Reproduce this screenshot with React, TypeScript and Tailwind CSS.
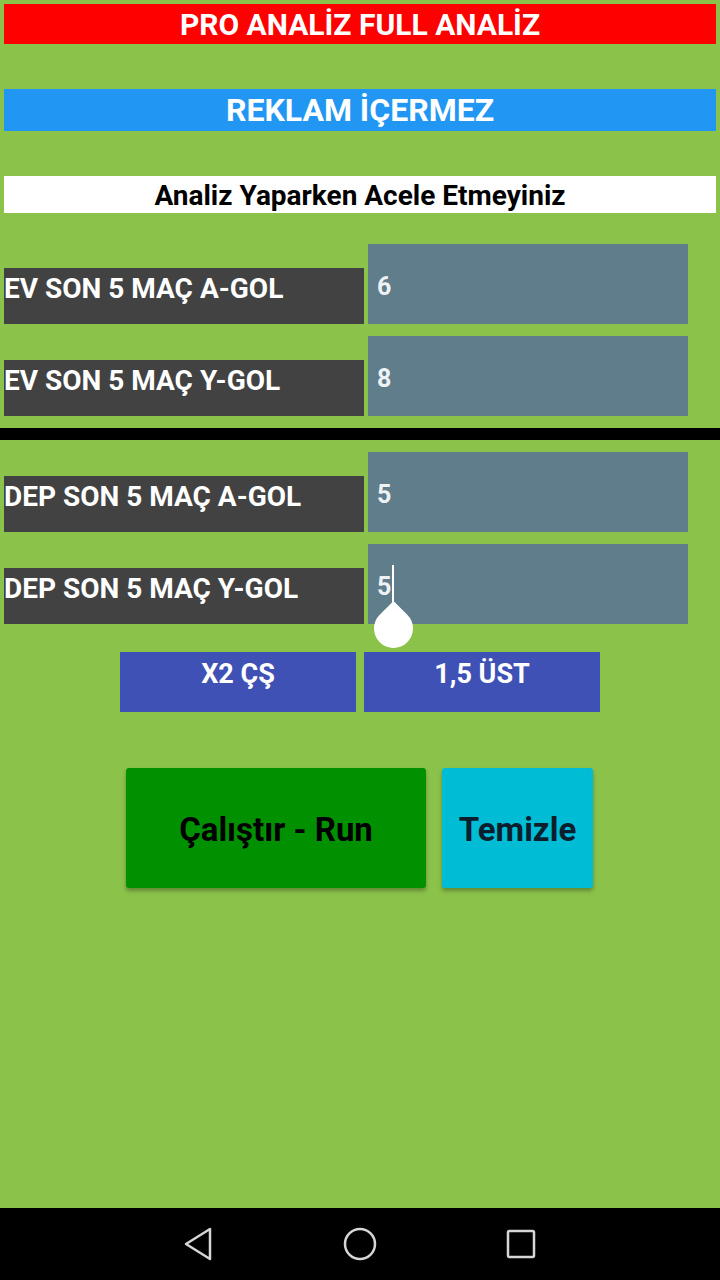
import { useState } from "react";

const rows = [
  { label: "EV SON 5 MAÇ A-GOL", value: "6" },
  { label: "EV SON 5 MAÇ Y-GOL", value: "8" },
];

const rows2 = [
  { label: "DEP SON 5 MAÇ A-GOL", value: "5" },
  { label: "DEP SON 5 MAÇ Y-GOL", value: "5", focused: true },
];

function Row({ label, value, focused }: { label: string; value: string; focused?: boolean }) {
  return (
    <div className="flex items-end gap-[4px] pl-[4px]">
      <div className="w-[360px] h-[56px] pt-[7px] bg-[#424242] text-white font-bold text-[28px] leading-[28px] whitespace-nowrap">
        {label}
      </div>
      <div className="relative w-[320px] h-[80px] bg-[#607d8b] flex items-center pl-[9px] pt-[4px] text-[#eef2f4] font-bold text-[25px] leading-none">
        <span>{value}</span>
        {focused && <span className="ml-[1px] w-[2px] h-[40px] bg-white mt-[-2px]" />}
      </div>
    </div>
  );
}

export default function App() {
  const [busy] = useState(false);

  return (
    <div className="relative w-[720px] h-[1280px] bg-[#8bc34a] flex flex-col font-['Roboto',sans-serif] overflow-hidden">
      {/* Header bars */}
      <div className="mx-[4px] mt-[4px] h-[40px] pt-[2px] bg-[#ff0000] flex items-center justify-center text-white font-bold text-[30px] leading-none">
        PRO ANALİZ FULL ANALİZ
      </div>
      <div className="mx-[4px] mt-[45px] h-[42px] bg-[#2196f3] flex items-center justify-center text-white font-bold text-[32px] leading-none">
        REKLAM İÇERMEZ
      </div>
      <div className="mx-[4px] mt-[45px] h-[37px] pt-[2px] bg-white flex items-center justify-center text-black font-bold text-[28px] leading-none">
        Analiz Yaparken Acele Etmeyiniz
      </div>

      {/* Home inputs */}
      <div className="mt-[31px] flex flex-col gap-[12px]">
        {rows.map((r) => (
          <Row key={r.label} label={r.label} value={r.value} />
        ))}
      </div>

      <div className="mt-[12px] h-[12px] bg-black" />

      {/* Away inputs */}
      <div className="mt-[12px] flex flex-col gap-[12px]">
        {rows2.map((r) => (
          <Row key={r.label} label={r.label} value={r.value} focused={r.focused} />
        ))}
      </div>

      {/* Result chips */}
      <div className="mt-[28px] flex gap-[8px] pl-[120px]">
        <div className="w-[236px] h-[60px] bg-[#3f51b5] flex justify-center pt-[8px] text-white font-bold text-[27px] leading-[28px]">
          X2 ÇŞ
        </div>
        <div className="w-[236px] h-[60px] bg-[#3f51b5] flex justify-center pt-[8px] text-white font-bold text-[27px] leading-[28px]">
          1,5 ÜST
        </div>
      </div>

      {/* Actions */}
      <div className="mt-[56px] flex gap-[16px] pl-[126px]">
        <button
          disabled={busy}
          className="w-[300px] h-[120px] pt-[3px] rounded-[3px] bg-[#009000] shadow-[0_3px_4px_rgba(0,0,0,0.3)] flex items-center justify-center text-black font-bold text-[33px]"
        >
          Çalıştır - Run
        </button>
        <button className="w-[151px] h-[120px] pt-[3px] rounded-[3px] bg-[#00bcd4] shadow-[0_3px_4px_rgba(0,0,0,0.3)] flex items-center justify-center text-[#0b1e2e] font-bold text-[33px]">
          Temizle
        </button>
      </div>

      <div className="flex-1" />

      {/* Android nav bar */}
      <div className="h-[72px] bg-black flex items-center justify-center gap-[128px]">
        <svg width="32" height="36" viewBox="0 0 32 36" fill="none" stroke="#d6d6d6" strokeWidth="2.5" strokeLinejoin="round">
          <path d="M27 3 L27 33 L3 18 Z" />
        </svg>
        <svg width="34" height="34" viewBox="0 0 34 34" fill="none" stroke="#d6d6d6" strokeWidth="2.5">
          <circle cx="17" cy="17" r="15" />
        </svg>
        <svg width="32" height="32" viewBox="0 0 32 32" fill="none" stroke="#d6d6d6" strokeWidth="2.5">
          <rect x="3" y="3" width="26" height="26" rx="1.5" />
        </svg>
      </div>

      {/* Text selection handle */}
      <div className="absolute left-[374px] top-[609px] w-[39px] h-[39px] bg-white rotate-45 rounded-full rounded-tl-none" />
    </div>
  );
}
